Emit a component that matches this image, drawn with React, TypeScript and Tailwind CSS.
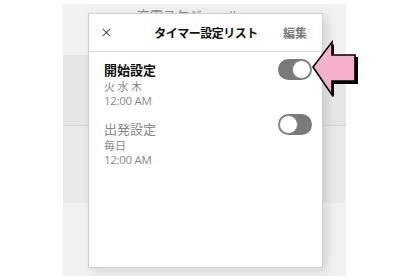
const jp = { fontFamily: '"Noto Sans CJK JP", "Noto Sans", sans-serif' };
const num = { fontFamily: '"Open Sans", "Liberation Sans", sans-serif' };

const Toggle = ({ on }: { on: boolean }) => (
	<div className="relative w-[34px] h-[21px] rounded-full bg-[#7a7a7a]">
		<div
			className={`absolute top-[1px] w-[19px] h-[19px] rounded-full bg-white border border-[#8a8a8a] ${
				on ? "right-[1px]" : "left-[1px]"
			}`}
		/>
	</div>
);

const Arrow = () => (
	<svg
		className="absolute left-[308px] top-[38px]"
		width="58"
		height="64"
		viewBox="308 38 58 64"
	>
		<polygon
			points="315,69 334,44 334,57 358,57 358,84 334,84 334,97"
			fill="#000"
		/>
		<polygon
			points="313,67 332,42 332,55 355,55 355,81 332,81 332,95"
			fill="#f4b1cd"
			stroke="#000"
			strokeWidth="1.6"
			strokeLinejoin="miter"
		/>
	</svg>
);

const App = () => {
	return (
		<div className="relative w-[406px] h-[276px] bg-white overflow-hidden" style={jp}>
			<div className="ml-[63px] mt-[4px] w-[283px] h-[272px] relative bg-gradient-to-r from-[#eeeeee] via-[#e9e9e9] to-[#f3f3f3] flex flex-col">
				{/* app behind the dialog */}
				<div className="h-[51px] bg-[#f1f1f1] flex items-start pt-[1px] pl-[60px] gap-[10px] text-[13px] text-[#8c8c8c]">
					<span>‹</span>
					<span>充電スケジュール</span>
				</div>
				<div className="h-[71px] bg-[#e6e6e6] border-b border-[#d6d6d6]" />
				<div className="h-[77px] bg-[#e9e9e9]" />
				<div className="flex-1 bg-[#f1f1f1]" />

				{/* dialog */}
				<div className="absolute left-[25px] top-[9px] w-[235px] h-[255px] bg-white border border-[#cfcfcf] shadow-[4px_3px_10px_rgba(0,0,0,0.12)] flex flex-col">
					<div className="h-[38px] flex items-center border-b border-[#dadada] px-[12px] shrink-0">
						<span className="w-[20px] text-[19px] font-light text-[#222] leading-none" style={num}>
							×
						</span>
						<span className="flex-1 text-center text-[12px] font-bold tracking-[-0.5px] text-[#111] pl-[8px]">
							タイマー設定リスト
						</span>
						<span className="text-[12px] font-bold text-[#7b7b7b] pr-[3px]">編集</span>
					</div>

					<div className="flex flex-col pl-[15px] pr-[10px] pt-[9px] gap-[12px]">
						<div className="flex items-start justify-between">
							<div className="flex flex-col">
								<span className="text-[13px] leading-[17px] font-bold text-[#111]">開始設定</span>
								<span className="text-[11px] leading-[16px] text-[#8a8a8a]">火 水 木</span>
								<span className="text-[11.5px] leading-[14px] text-[#8a8a8a] tracking-[-0.3px]" style={num}>
									12:00 AM
								</span>
							</div>
							<div className="-mt-[2px]">
								<Toggle on={true} />
							</div>
						</div>
						<div className="flex items-start justify-between">
							<div className="flex flex-col">
								<span className="text-[13px] leading-[17px] text-[#888]">出発設定</span>
								<span className="text-[11px] leading-[16px] text-[#8a8a8a]">毎日</span>
								<span className="text-[11.5px] leading-[14px] text-[#8a8a8a] tracking-[-0.3px]" style={num}>
									12:00 AM
								</span>
							</div>
							<div className="-mt-[6px]">
								<Toggle on={false} />
							</div>
						</div>
					</div>
				</div>
			</div>
			<Arrow />
		</div>
	);
};

export default App;
